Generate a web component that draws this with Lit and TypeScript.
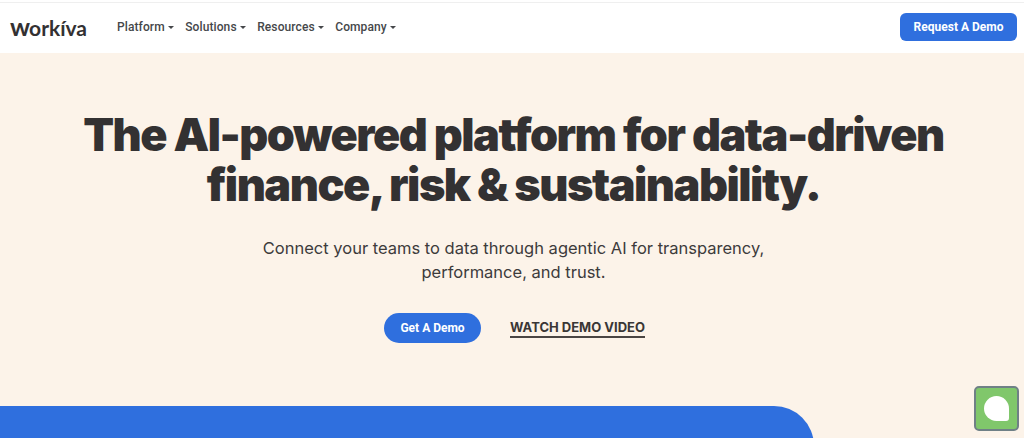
import { LitElement, html, css } from "lit";
import { customElement } from "lit/decorators.js";

@customElement("app-root")
export class AppRoot extends LitElement {
  static styles = css`
    :host { display: block; width: 1024px; height: 438px; overflow: hidden; position: relative; background: #fcf3e9; font-family: "Inter", "Liberation Sans", sans-serif; color: #333132; }
    .top { background: #fff; border-bottom: 1px solid #efefef; box-sizing: border-box; height: 3px; }
    header { height: 50px; background: #fff; display: flex; align-items: center; padding: 0 7px 0 10px; }
    .logo { font-family: "Lato", sans-serif; font-weight: 700; font-size: 21px; letter-spacing: 0; width: 107px; line-height: 1; color: #333132; margin-top: -3px; }
    .logo .w { font-size: 25px; letter-spacing: -1px; }
    nav { display: flex; gap: 11.5px; flex: 1; margin-top: -2px; }
    .item { display: flex; align-items: center; gap: 3px; font-family: "Roboto", sans-serif; font-size: 12px; font-weight: 500; letter-spacing: 0.1px; color: #45474a; }
    .caret { width: 0; height: 0; border-left: 3.5px solid transparent; border-right: 3.5px solid transparent; border-top: 3.5px solid #45474a; }
    .req { width: 117px; height: 28px; border-radius: 6px; background: #2f6fde; color: #fff; font-family: "Roboto", sans-serif; font-size: 12px; font-weight: 700; display: flex; align-items: center; justify-content: center; margin-top: -3px; }
    main { display: flex; flex-direction: column; align-items: center; padding-top: 57px; padding-left: 3px; }
    h1 { margin: 0; font-size: 45px; line-height: 50px; font-weight: 900; text-align: center; letter-spacing: -1.5px; color: #333132; }
    p { margin: 27px 0 0; font-size: 16.5px; line-height: 23.5px; text-align: center; color: #3d3b3c; }
    .cta { display: flex; align-items: center; gap: 29px; margin-top: 29px; margin-left: 2px; }
    .get { width: 97px; height: 30px; border-radius: 15px; background: #2f6fde; color: #fff; font-family: "Roboto", sans-serif; font-size: 12px; font-weight: 700; display: flex; align-items: center; justify-content: center; }
    .watch { font-size: 13px; font-weight: 700; color: #3a3635; border-bottom: 2px solid #4a4543; line-height: 16px; padding-bottom: 1px; }
    .band { position: absolute; left: 0; top: 406px; width: 814px; height: 60px; background: #2f6fde; border-top-right-radius: 40px; }
    .chat { position: absolute; left: 974px; top: 386px; width: 45px; height: 45px; box-sizing: border-box; border: 2px solid #6f8086; border-radius: 5px; background: #80c76b; display: flex; align-items: center; justify-content: center; }
    .bubble { width: 25px; height: 25px; background: #fff; border-radius: 50% 50% 3px 50%; }
  `;
  render() {
    return html`
      <div class="top"></div>
      <header>
        <div class="logo"><span class="w">w</span>orkíva</div>
        <nav>
          ${["Platform", "Solutions", "Resources", "Company"].map(
            (n) => html`<div class="item">${n}<span class="caret"></span></div>`
          )}
        </nav>
        <div class="req">Request A Demo</div>
      </header>
      <main>
        <h1>The AI-powered platform for data-driven<br />finance, risk &amp; sustainability.</h1>
        <p>Connect your teams to data through agentic AI for transparency,<br />performance, and trust.</p>
        <div class="cta">
          <div class="get">Get A Demo</div>
          <div class="watch">WATCH DEMO VIDEO</div>
        </div>
      </main>
      <div class="band"></div>
      <div class="chat"><div class="bubble"></div></div>
    `;
  }
}
